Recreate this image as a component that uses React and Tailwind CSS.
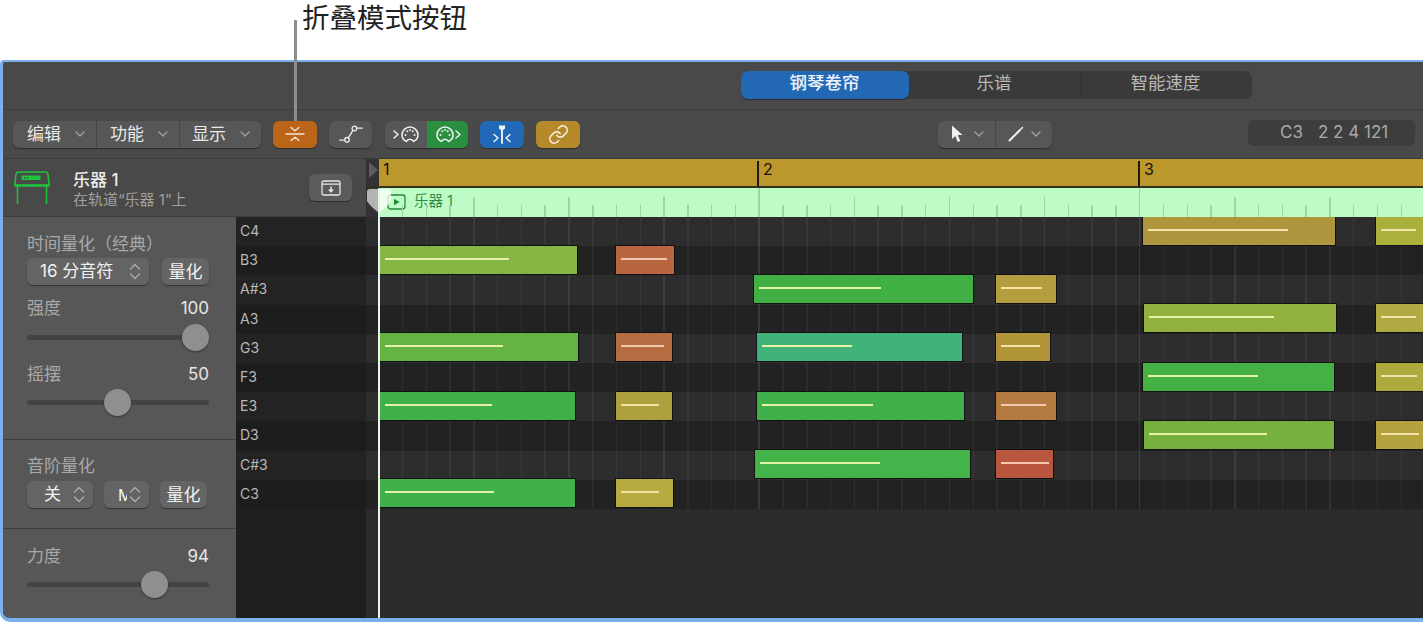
import React from "react";
import { ChevronDown, Link } from "lucide-react";

const rows = [
  { key: "C4", light: true },
  { key: "B3" },
  { key: "A#3", light: true },
  { key: "A3" },
  { key: "G3", light: true },
  { key: "F3" },
  { key: "E3", light: true },
  { key: "D3" },
  { key: "C#3", light: true },
  { key: "C3" },
];

const GREEN_LINE = "bg-[#e8f2a6]";
const GOLD_LINE = "bg-[#f3e3a8]";
const RED_LINE = "bg-[#f3c6b0]";

// x1, x2, lineEnd in page pixels
const notes = [
  { row: 0, x1: 1142, x2: 1336, end: 1288, color: "bg-[#b0953f]", line: GOLD_LINE },
  { row: 0, x1: 1375, x2: 1440, end: 1416, color: "bg-[#a9b03c]", line: GOLD_LINE },
  { row: 1, x1: 379, x2: 578, end: 509, color: "bg-[#85b542]", line: GREEN_LINE },
  { row: 1, x1: 615, x2: 675, end: 667, color: "bg-[#b8663f]", line: RED_LINE },
  { row: 2, x1: 753, x2: 974, end: 881, color: "bg-[#40b044]", line: GREEN_LINE },
  { row: 2, x1: 995, x2: 1057, end: 1042, color: "bg-[#b39d3f]", line: GOLD_LINE },
  { row: 3, x1: 1143, x2: 1337, end: 1274, color: "bg-[#92b040]", line: GREEN_LINE },
  { row: 3, x1: 1375, x2: 1440, end: 1416, color: "bg-[#b0aa42]", line: GOLD_LINE },
  { row: 4, x1: 379, x2: 579, end: 503, color: "bg-[#64b343]", line: GREEN_LINE },
  { row: 4, x1: 615, x2: 673, end: 664, color: "bg-[#b56c40]", line: RED_LINE },
  { row: 4, x1: 756, x2: 963, end: 852, color: "bg-[#40b27a]", line: GREEN_LINE },
  { row: 4, x1: 995, x2: 1051, end: 1040, color: "bg-[#b29539]", line: GOLD_LINE },
  { row: 5, x1: 1142, x2: 1335, end: 1258, color: "bg-[#45b144]", line: GREEN_LINE },
  { row: 5, x1: 1375, x2: 1440, end: 1417, color: "bg-[#adab3e]", line: GOLD_LINE },
  { row: 6, x1: 379, x2: 576, end: 492, color: "bg-[#40b14a]", line: GREEN_LINE },
  { row: 6, x1: 615, x2: 673, end: 659, color: "bg-[#aea03e]", line: GOLD_LINE },
  { row: 6, x1: 756, x2: 965, end: 873, color: "bg-[#40b14a]", line: GREEN_LINE },
  { row: 6, x1: 995, x2: 1057, end: 1046, color: "bg-[#b47a40]", line: RED_LINE },
  { row: 7, x1: 1143, x2: 1335, end: 1267, color: "bg-[#76b03f]", line: GREEN_LINE },
  { row: 7, x1: 1375, x2: 1440, end: 1419, color: "bg-[#b3a33f]", line: GOLD_LINE },
  { row: 8, x1: 754, x2: 971, end: 880, color: "bg-[#42b449]", line: GREEN_LINE },
  { row: 8, x1: 995, x2: 1054, end: 1049, color: "bg-[#b85640]", line: RED_LINE },
  { row: 9, x1: 379, x2: 576, end: 494, color: "bg-[#40b14a]", line: GREEN_LINE },
  { row: 9, x1: 615, x2: 674, end: 659, color: "bg-[#b6aa40]", line: GOLD_LINE },
];

const GRID_LEFT = 12; // first bar, measured from the left of the ruler column
const STEP = 23.78;
const ROW_H = 29.2;
const ticks = Array.from({ length: 46 }, (_, i) => i);

const btn = "flex items-center h-[27px] rounded-[6px] shadow-[0_1px_1px_rgba(0,0,0,0.4)]";

const UpDown = () => (
  <svg width="12" height="19" viewBox="0 0 12 19" fill="none" stroke="#a8a8a8" strokeWidth="1.5" strokeLinecap="round" strokeLinejoin="round">
    <path d="M1.5 7 6 2.5 10.5 7" />
    <path d="M1.5 12 6 16.5 10.5 12" />
  </svg>
);

const MidiPlug = ({ x = 0 }) => (
  <g transform={`translate(${x} 0)`}>
    <path d="M6.5 17.5C3.5 16 2 13.6 2 11c0-4.4 3.6-8 8-8s8 3.6 8 8c0 2.6-1.5 5-4.5 6.5-.8-1.6-1.8-2.2-3.5-2.2s-2.7.6-3.5 2.2z" />
    <circle cx="5.5" cy="11" r="1" fill="currentColor" stroke="none" />
    <circle cx="7.3" cy="7.3" r="1" fill="currentColor" stroke="none" />
    <circle cx="10" cy="6" r="1" fill="currentColor" stroke="none" />
    <circle cx="12.7" cy="7.3" r="1" fill="currentColor" stroke="none" />
    <circle cx="14.5" cy="11" r="1" fill="currentColor" stroke="none" />
  </g>
);

const Slider = ({ left }) => (
  <div className="relative flex items-center h-[27px]">
    <div className="w-full h-[5px] rounded-full bg-[#434343]" />
    <div
      className="absolute top-0 w-[27px] h-[27px] rounded-full bg-[#8f8f8f] shadow-[0_1px_2px_rgba(0,0,0,0.4)]"
      style={{ left }}
    />
  </div>
);

const LabelRow = ({ label, value }) => (
  <div className="flex items-center justify-between h-5 pt-[3px] text-[17px]">
    <span className="text-[#a9a9a9]">{label}</span>
    <span className="text-[#e6e6e6]">{value}</span>
  </div>
);

const QuantizeButton = () => (
  <div className={`${btn} justify-center pt-[2px] w-[47px] bg-[#646464] text-[#f2f2f2] text-[17px]`}>量化</div>
);

const Inspector = () => (
  <div className="flex flex-col w-[233px] bg-[#575757]">
    <div className="h-[223px] pt-4 pl-6 pr-[27px] border-b border-[#3f3f3f]">
      <div className="h-5 flex items-center pt-[3px] text-[17px] text-[#a9a9a9]">时间量化（经典）</div>
      <div className="flex justify-between mt-[5px]">
        <div className={`${btn} w-[122px] bg-[#646464] text-[#f2f2f2] text-[17px] pl-[13px] pr-[8px] justify-between`}>
          <span>16 分音符</span>
          <UpDown />
        </div>
        <QuantizeButton />
      </div>
      <div className="mt-[12px]"><LabelRow label="强度" value="100" /></div>
      <div className="mt-[7px]"><Slider left={155} /></div>
      <div className="mt-[12px]"><LabelRow label="摇摆" value="50" /></div>
      <div className="mt-[6px]"><Slider left={76.8} /></div>
    </div>
    <div className="h-[89px] pt-4 pl-6 pr-[27px] border-b border-[#3f3f3f]">
      <div className="h-5 flex items-center pt-[2px] text-[17px] text-[#a9a9a9]">音阶量化</div>
      <div className="flex mt-[5px]">
        <div className={`${btn} w-[66px] bg-[#646464] text-[#f2f2f2] text-[17px] pl-[17px] pr-[8px] justify-between`}>
          <span>关</span>
          <UpDown />
        </div>
        <div className={`${btn} w-[45px] ml-[11px] bg-[#646464] text-[#f2f2f2] text-[16px] pl-[14px] pr-[8px] justify-between`}>
          <span className="w-[9px] overflow-hidden">M</span>
          <UpDown />
        </div>
        <div className="ml-[11px]"><QuantizeButton /></div>
      </div>
    </div>
    <div className="flex-1 pt-4 pl-6 pr-[27px]">
      <LabelRow label="力度" value="94" />
      <div className="mt-[6px]"><Slider left={113.8} /></div>
    </div>
  </div>
);

const KeyList = () => (
  <div className="flex flex-col w-[130px] bg-[#1f1f1f]">
    {rows.map((r) => (
      <div
        key={r.key}
        className={`h-[29.2px] flex items-center pl-[4px] pb-[2px] text-[14px] text-[#b8b8b8] ${r.light ? "bg-[#232323]" : "bg-[#1d1d1d]"}`}
      >
        {r.key}
      </div>
    ))}
  </div>
);

const PianoIcon = () => (
  <svg width="38" height="34" viewBox="0 0 38 34" fill="none" stroke="#1ec53c" strokeWidth="1.5" className="mt-[1px]">
    <path d="M3 3.5Q3.3 1 6 1h26q2.7 0 3 2.5l1.2 10.5H1.8z" />
    <path d="M1.8 14.8h34.4" strokeWidth="2" />
    <path d="M4.5 15v18M33.5 15v18" />
    <rect x="8.5" y="4.5" width="19" height="4.5" fill="#1ec53c" stroke="none" />
    <path d="M11 6.7h1.5M14 6.7h1.5" stroke="#494949" strokeWidth="1.5" />
  </svg>
);

const TrackHeader = () => (
  <div className="flex items-center h-[58px] pl-[10px] pr-[14px] bg-[#494949] border-b border-[#3b3b3b]">
    <PianoIcon />
    <div className="flex flex-col ml-[22px] pt-[4px] flex-1">
      <span className="text-[17px] leading-[20px] font-medium text-[#ececec]">乐器 1</span>
      <span className="text-[15px] leading-[19px] text-[#a0a0a0]">在轨道“乐器 1”上</span>
    </div>
    <div className={`${btn} justify-center w-[43px] bg-[#5b5b5b]`}>
      <svg width="20" height="16" viewBox="0 0 20 16" fill="none" stroke="#e8e8e8" strokeWidth="1.3">
        <rect x="1" y="1" width="18" height="14" rx="1.5" />
        <path d="M1 4.2h18" />
        <path d="M10 6.5v5M7.8 9.4 10 11.7l2.2-2.3" strokeWidth="1.5" />
      </svg>
    </div>
  </div>
);

const Ruler = () => (
  <div className="relative h-[58px]">
    <div className="flex h-[29px] bg-[#333333] border-b-2 border-[#33301f]">
      <div className="w-[13px] flex items-start pt-[3px] pl-[3px]">
        <div className="w-0 h-0 border-y-[8px] border-y-transparent border-l-[9px] border-l-[#5c5c5c]" />
      </div>
      <div className="relative flex-1 bg-[#bc982c] text-[16px] text-[#161208] leading-[20px]">
        <span className="absolute left-[4px] top-0">1</span>
        <div className="absolute left-[378px] top-[2px] bottom-0 w-[1.5px] bg-[#1d1a10]" />
        <span className="absolute left-[384px] top-0">2</span>
        <div className="absolute left-[759px] top-[2px] bottom-0 w-[1.5px] bg-[#1d1a10]" />
        <span className="absolute left-[765px] top-0">3</span>
      </div>
    </div>
    <div className="flex h-[29px] bg-[#333333]">
      <div className="w-[13px]" />
      <div className="relative flex-1 bg-[#bdfcc6] flex items-center pl-[8px] text-[14.5px] text-[#2c8c46]">
        <svg width="19" height="16" viewBox="0 0 19 16" fill="none" stroke="#1f8a38" strokeWidth="1.3" className="mb-[1px]">
          <rect x="1" y="1" width="17" height="14" rx="2.5" />
          <path d="M7 4.7v6.6l5.5-3.3z" fill="#1f8a38" stroke="none" />
        </svg>
        <span className="ml-[8px] mb-[4px]">乐器 1</span>
        {ticks.map((i) => (
          <div
            key={i}
            className={`absolute bottom-0 w-[1.5px] bg-[#a0d3aa] ${i % 16 === 0 ? "top-0" : i % 4 === 0 ? "top-[9px]" : "top-[17px]"}`}
            style={{ left: i * STEP - 1 }}
          />
        ))}
      </div>
    </div>
    {/* playhead cap */}
    <svg width="24" height="24" viewBox="0 0 24 24" className="absolute left-[1px] top-[30px]">
      <path d="M0 3Q0 0 3 0h9v24Q3 17 0 12z" fill="#b4b4b4" />
      <path d="M12 0h9q3 0 3 3v9q-3 5-12 12z" fill="#ffffff" fillOpacity="0.75" />
    </svg>
    <div className="absolute left-[12px] top-[30px] bottom-0 w-[1.5px] bg-[#e8f5ea]" />
  </div>
);

const PianoGrid = () => (
  <div className="relative flex-1 overflow-hidden bg-[#2b2b2b]">
    {rows.map((r) => (
      <div key={r.key} className={`h-[29.2px] ${r.light ? "bg-[#2d2d2d]" : "bg-[#222222]"}`} />
    ))}
    {ticks.map((i) => (
      <div
        key={i}
        className={`absolute top-0 h-[292px] w-[1.5px] ${i % 16 === 0 ? "bg-white/10" : i % 4 === 0 ? "bg-white/[0.07]" : "bg-white/[0.05]"}`}
        style={{ left: GRID_LEFT + i * STEP }}
      />
    ))}
    {notes.map((n) => (
      <div
        key={`${n.row}-${n.x1}`}
        className={`absolute h-[30px] border-[1.5px] border-[#111111] ${n.color}`}
        style={{ left: n.x1 - 366, top: n.row * ROW_H - 1.5, width: n.x2 - n.x1 }}
      >
        <div
          className={`absolute top-[12px] h-[2px] left-[4.5px] ${n.line}`}
          style={{ width: n.end - n.x1 - 6 }}
        />
      </div>
    ))}
    <div className="absolute left-[12px] top-0 bottom-0 w-[1.5px] bg-[#e8f5ea]" />
  </div>
);

const Toolbar = () => (
  <div className="flex items-center h-[49px] pl-[10px] text-[#e8e8e8] border-b border-[#3b3b3b]">
    <div className={`${btn} bg-[#575757] w-[248px] text-[17px]`}>
      <div className="flex items-center justify-between h-full flex-1 pl-[14px] pr-[8px]">
        <span className="pt-[2px]">编辑</span>
        <ChevronDown size={16} strokeWidth={2} color="#a0a0a0" />
      </div>
      <div className="flex items-center justify-between h-full flex-1 pl-[13px] pr-[8px] border-l border-[#474747]">
        <span className="pt-[2px]">功能</span>
        <ChevronDown size={16} strokeWidth={2} color="#a0a0a0" />
      </div>
      <div className="flex items-center justify-between h-full flex-1 pl-[12px] pr-[8px] border-l border-[#474747]">
        <span className="pt-[2px]">显示</span>
        <ChevronDown size={16} strokeWidth={2} color="#a0a0a0" />
      </div>
    </div>
    <div className={`${btn} justify-center ml-[12px] w-[44px] bg-[#bb6519]`}>
      <svg width="20" height="18" viewBox="0 0 20 18" fill="none" stroke="#f6e6d6" strokeWidth="1.3" strokeLinecap="round" strokeLinejoin="round">
        <path d="M1 9h18" />
        <path d="M6 2.5 10 5.8l4-3.300" />
        <path d="M6 15.5 10 12.2l4 3.300" />
      </svg>
    </div>
    <div className={`${btn} justify-center ml-[12px] w-[43px] bg-[#575757]`}>
      <svg width="24" height="18" viewBox="0 0 24 18" fill="none" stroke="#ececec" strokeWidth="1.3" strokeLinecap="round">
        <path d="M0.8 15.2H5.6" />
        <circle cx="8" cy="14.8" r="2.3" />
        <path d="M9.4 12.8 14 5.2" />
        <circle cx="15.4" cy="3.5" r="2.3" />
        <path d="M17.8 3.2H23.2" />
      </svg>
    </div>
    <div className={`${btn} ml-[13px] w-[83px] overflow-hidden`}>
      <div className="flex items-center justify-center w-[42px] h-full bg-[#575757] text-[#f0f0f0]">
        <svg width="31" height="20" viewBox="0 0 31 20" fill="none" stroke="currentColor" strokeWidth="1.5" strokeLinecap="round" strokeLinejoin="round">
          <path d="M3 7 7 10.5 3 14" />
          <MidiPlug x={9} />
        </svg>
      </div>
      <div className="flex items-center justify-center flex-1 h-full bg-[#2a9040] text-[#f0f0f0]">
        <svg width="31" height="20" viewBox="0 0 31 20" fill="none" stroke="currentColor" strokeWidth="1.5" strokeLinecap="round" strokeLinejoin="round">
          <MidiPlug x={3} />
          <path d="M24 7 28 10.5 24 14" />
        </svg>
      </div>
    </div>
    <div className={`${btn} justify-center ml-[12px] w-[44px] bg-[#2169b6]`}>
      <svg width="20" height="20" viewBox="0 0 20 20" fill="none" stroke="#f2f6fb" strokeWidth="1.4" strokeLinecap="round" strokeLinejoin="round">
        <path d="M10 7v12" strokeWidth="1.8" />
        <path d="M7 1.5h6v3l-3 2.5-3-2.5z" fill="#f2f6fb" stroke="none" />
        <path d="M2 10.5 6 14 2 17.5" />
        <path d="M18 10.5 14 14l4 3.5" />
      </svg>
    </div>
    <div className={`${btn} justify-center ml-[12px] w-[44px] bg-[#b68a2b]`}>
      <Link size={21} strokeWidth={1.8} color="#f7efdc" />
    </div>
    <div className={`${btn} ml-[358px] w-[114px] bg-[#575757]`}>
      <div className="flex items-center justify-between w-[57px] h-full pl-[12px] pr-[8px]">
        <svg width="14" height="18" viewBox="0 0 14 18" fill="#f0f0f0">
          <path d="M2 0.5v13.5l3.3-3 2.4 6 2.6-1.1-2.5-5.8H12.500z" />
        </svg>
        <ChevronDown size={16} strokeWidth={2} color="#a0a0a0" />
      </div>
      <div className="flex items-center justify-between flex-1 h-full pl-[12px] pr-[8px] border-l border-[#474747]">
        <svg width="16" height="16" viewBox="0 0 16 16" fill="none" stroke="#f0f0f0" strokeLinecap="round">
          <path d="M1.5 14.5 12 4" strokeWidth="2" />
          <path d="M13 3 14.5 1.5" strokeWidth="1.5" />
        </svg>
        <ChevronDown size={16} strokeWidth={2} color="#a0a0a0" />
      </div>
    </div>
    <div className="flex items-center ml-[196px] mb-[3px] w-[167px] h-[26px] rounded-[6px] bg-[#3d3d3d] text-[17px] text-[#a9a9a9] pl-[32px]">
      <span>C3</span>
      <span className="ml-[15px]">2 2 4 121</span>
    </div>
  </div>
);

const TabBar = () => (
  <div className="flex items-center h-[48px] pb-[2px] border-b border-[#3d3d3d]">
    <div className="flex ml-[738px] w-[511px] h-[28px] rounded-[7px] bg-[#3a3a3a] text-[17.5px] text-[#b8b8b8]">
      <div className="flex items-center justify-center w-[168px] pb-[2px] pr-[1px] rounded-[7px] bg-[#2368b5] font-medium text-[#eef3fa] shadow-[0_1px_1px_rgba(0,0,0,0.4)]">钢琴卷帘</div>
      <div className="flex items-center justify-center w-[172px] pb-[2px] pr-[2px]">
        <span>乐谱</span>
      </div>
      <div className="flex items-center justify-center flex-1 pb-[2px] pr-[3px] border-l border-[#303030] my-[1px]">智能速度</div>
    </div>
  </div>
);

export default function App() {
  return (
    <div className="relative w-[1423px] h-[622px] overflow-hidden bg-white font-['Inter','Noto_Sans_CJK_SC',sans-serif]">
      <div className="flex items-center h-[60px] pl-[302px] pb-[23px] text-[27.5px] text-[#222222]">折叠模式按钮</div>
      <div className="flex flex-col h-[556px] box-content border-t-2 border-l-[3px] border-b-4 border-[#7ab0ee] rounded-bl-[10px] rounded-tl-[4px] overflow-hidden bg-[#494949]">
        <TabBar />
        <Toolbar />
        <div className="flex flex-1 min-h-0">
          <div className="flex flex-col w-[363px]">
            <TrackHeader />
            <div className="flex flex-1 min-h-0">
              <Inspector />
              <KeyList />
            </div>
          </div>
          <div className="relative flex flex-col flex-1 min-w-0">
            <Ruler />
            <PianoGrid />
          </div>
        </div>
      </div>
      {/* callout leader */}
      <div className="absolute left-[294px] top-[20px] w-[2.5px] h-[101px] bg-[#8d8d8d]" />
    </div>
  );
}
